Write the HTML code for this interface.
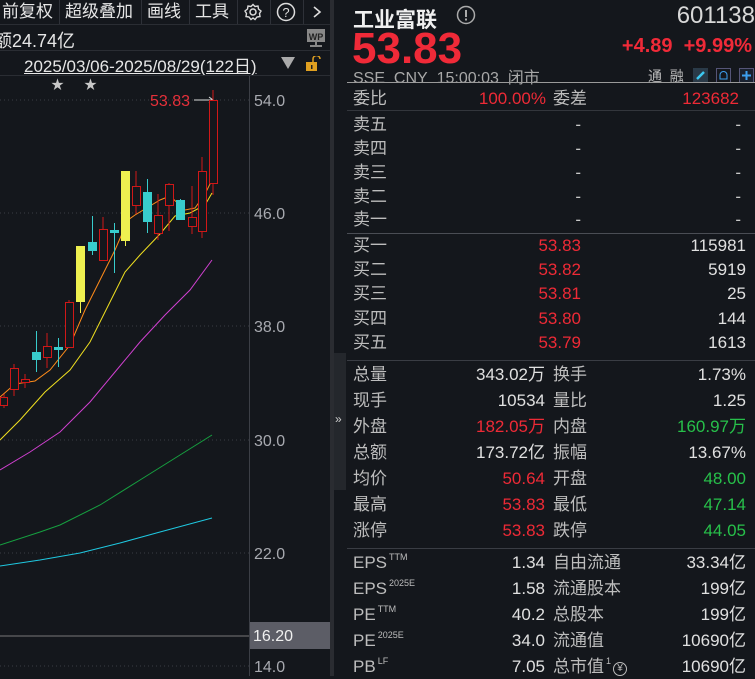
<!DOCTYPE html>
<html><head><meta charset="utf-8"><style>
*{margin:0;padding:0;box-sizing:border-box}
body{width:755px;height:676px;background:#14171c;overflow:hidden;position:relative;font-family:"Liberation Sans","Noto Sans CJK SC",sans-serif;color:#c8c8c8}
.a{position:absolute;white-space:nowrap}
.tb{position:absolute;top:0;height:24px;font-size:17px;line-height:24px;color:#e6e6e6}
.sep{position:absolute;top:0;width:1px;height:24px;background:#2e3138}
.row{position:absolute;left:353px;width:393px;height:24px;font-size:17px;line-height:24px}
.row span{position:absolute}
.l1{left:0;color:#bdbdbd}.v1{right:201px;text-align:right}.l2{left:200px;color:#bdbdbd}.v2{right:0;text-align:right}
.w{color:#e0e0e0}.r{color:#ee2a36}.g{color:#27c04a}
sup{font-size:9px;vertical-align:baseline;position:relative;top:-8px;line-height:0;margin-left:2px}
.yen{display:inline-block;width:14px;height:14px;border:1px solid #bbb;border-radius:50%;font-size:10px;line-height:12px;text-align:center;vertical-align:1px;margin-left:2px}
</style></head><body>
<div class="tb" style="left:2px">前复权</div><div class="sep" style="left:59px"></div>
<div class="tb" style="left:65px">超级叠加</div><div class="sep" style="left:141px"></div>
<div class="tb" style="left:147px">画线</div><div class="sep" style="left:189px"></div>
<div class="tb" style="left:195px">工具</div><div class="sep" style="left:237px"></div>
<svg class="a" style="left:243px;top:3px" width="20" height="18" viewBox="0 0 20 18"><circle cx="10" cy="9" r="3" fill="none" stroke="#ddd" stroke-width="1.5"/><path d="M10 1.5 L12 3.5 L15 3 L15.5 6 L18 8 L16.5 10.5 L17 13.5 L14 14 L12 16.5 L10 15 L8 16.5 L6 14 L3 13.5 L3.5 10.5 L2 8 L4.5 6 L5 3 L8 3.5 Z" fill="none" stroke="#ddd" stroke-width="1.4"/></svg>
<div class="sep" style="left:270px"></div>
<svg class="a" style="left:276px;top:2px" width="20" height="20"><circle cx="10" cy="10" r="8.5" fill="none" stroke="#ddd" stroke-width="1.5"/><text x="10" y="15" font-size="13" fill="#ddd" text-anchor="middle" font-family="Liberation Sans">?</text></svg>
<div class="sep" style="left:303px"></div>
<svg class="a" style="left:311px;top:5px" width="12" height="14"><path d="M3 2 L9 7 L3 12" fill="none" stroke="#ddd" stroke-width="1.6"/></svg>
<div class="a" style="left:0;top:24px;width:330px;height:1px;background:#2a2d33"></div>
<div class="a" style="left:-6px;top:27px;font-size:18px;color:#e6e6e6">额24.74亿</div>
<svg class="a" style="left:306px;top:28px" width="20" height="20"><rect x="1" y="1" width="18" height="13" fill="#888"/><text x="10" y="12" font-size="9" font-weight="bold" fill="#222" text-anchor="middle" font-family="Liberation Sans">WP</text><rect x="9" y="14" width="2" height="3" fill="#888"/><rect x="4" y="17" width="12" height="2" fill="#888"/></svg>
<div class="a" style="left:0;top:50px;width:330px;height:1px;background:#2a2d33"></div>
<div class="a" style="left:24px;top:52px;font-size:17px;color:#e6e6e6;text-decoration:underline">2025/03/06-2025/08/29(122日)</div>
<svg class="a" style="left:280px;top:56px" width="16" height="14"><path d="M1 1 L15 1 L8 13 Z" fill="#aaa"/></svg>
<svg class="a" style="left:304px;top:56px" width="18" height="16"><path d="M9 6 V3 a3.5 3.5 0 0 1 7 0" fill="none" stroke="#e0a020" stroke-width="1.5"/><rect x="2" y="6" width="11" height="9" fill="#e0a020"/><rect x="7" y="9" width="1.5" height="4" fill="#222"/></svg>
<div class="a" style="left:0;top:75px;width:330px;height:1px;background:#2a2d33"></div>
<svg class="a" style="left:0;top:76px" width="330" height="600" viewBox="0 76 330 600">
<g stroke="#3a3d44" stroke-dasharray="1,3" stroke-width="1">
<line x1="0" y1="100" x2="249" y2="100"/><line x1="0" y1="213" x2="249" y2="213"/><line x1="0" y1="326" x2="249" y2="326"/><line x1="0" y1="440" x2="249" y2="440"/><line x1="0" y1="553" x2="249" y2="553"/><line x1="0" y1="666" x2="249" y2="666"/></g>
<line x1="249.5" y1="76" x2="249.5" y2="676" stroke="#3c3f46"/>
<line x1="0" y1="636" x2="249" y2="636" stroke="#777"/>
<g fill="#c8c8c8" font-size="13"><text x="51" y="89">★</text><text x="84" y="89">★</text></g>
<text x="150" y="106" fill="#e6303a" font-size="16" font-family="Liberation Sans">53.83</text>
<path d="M194 100 H213 M209 97 L213 100 L209 103" stroke="#ddd" fill="none"/>
<g font-size="16" fill="#a8aab0" font-family="Liberation Sans"><text x="254" y="106">54.0</text><text x="254" y="219">46.0</text><text x="254" y="332">38.0</text><text x="254" y="446">30.0</text><text x="254" y="559">22.0</text><text x="254" y="672">14.0</text></g>
<rect x="250" y="622" width="80" height="27" fill="#5c5d66"/>
<text x="253" y="641" fill="#f0f0f0" font-size="16" font-family="Liberation Sans">16.20</text>
<g fill="none" stroke-width="1">
<polyline stroke="#1fc8e0" points="0,566 40,560 80,553 120,543 160,532 212,518"/>
<polyline stroke="#16a040" points="0,545 40,532 60,525 100,505 140,480 180,455 212,435"/>
<polyline stroke="#d040d0" points="0,470 30,452 60,432 90,402 115,372 140,342 165,315 190,290 212,260"/>
<polyline stroke="#f0e020" points="0,440 20,420 45,392 70,370 90,342 110,302 125,272 140,255 160,234 175,216 190,213 205,205 212,193"/>
<polyline stroke="#ff8c1a" points="0,397 15,384 35,381 50,370 70,345 85,310 100,280 115,250 128,220 135,215 160,200 170,196 185,210 195,208 205,194 212,180"/>
</g>
<g stroke="#d01818" fill="none">
<path d="M4 394V408 M14 364V396 M25 374V388 M47 333V368 M69 300V347 M103 217V260 M136 171V214 M158 194V240 M169 183V231 M192 186V234 M202 157V238 M213 90V195"/>
<rect x="0.5" y="397.5" width="7" height="8" fill="#14171c"/>
<rect x="10.5" y="368.5" width="8" height="21" fill="#14171c"/>
<rect x="21.5" y="379.5" width="8" height="3" fill="#14171c"/>
<rect x="43.5" y="346.5" width="8" height="11" fill="#14171c"/>
<rect x="65.5" y="302.5" width="8" height="45" fill="#14171c"/>
<rect x="99.5" y="229.5" width="8" height="31" fill="#14171c"/>
<rect x="132.5" y="186.5" width="8" height="19" fill="#14171c"/>
<rect x="154.5" y="215.5" width="8" height="18" fill="#14171c"/>
<rect x="165.5" y="184.5" width="8" height="21" fill="#14171c"/>
<rect x="188.5" y="217.5" width="8" height="9" fill="#14171c"/>
<rect x="198.5" y="171.5" width="8" height="60" fill="#14171c"/>
<rect x="209.5" y="100.5" width="8" height="83" fill="#14171c"/>
</g>
<g stroke="#38cccc" fill="#38cccc">
<path d="M36.5 331V372 M58.5 338V367 M92.5 216V255 M114.5 223V273 M147.5 179V233 M180.5 199V220" fill="none"/>
<rect x="32" y="352" width="9" height="8" stroke="none"/><rect x="54" y="347" width="9" height="3" stroke="none"/><rect x="88" y="242" width="9" height="9" stroke="none"/><rect x="110" y="230" width="9" height="3" stroke="none"/><rect x="143" y="192" width="9" height="30" stroke="none"/><rect x="176" y="200" width="9" height="20" stroke="none"/>
</g>
<g stroke="#eef050" fill="#eef050"><path d="M80.5 300V313 M125.5 240V246" fill="none"/><rect x="76" y="246" width="9" height="56" stroke="none"/><rect x="121" y="171" width="9" height="70" stroke="none"/></g>
</svg>
<div class="a" style="left:330px;top:0;width:4px;height:676px;background:#2a2c31"></div>
<div class="a" style="left:334px;top:353px;width:12px;height:137px;background:#24272c"></div>
<div class="a" style="left:335px;top:412px;font-size:12px;color:#ccc">»</div>
<div class="a" style="left:353px;top:4px;font-size:21px;font-weight:bold;color:#f0f0f0">工业富联</div>
<svg class="a" style="left:456px;top:5px" width="20" height="20"><circle cx="10" cy="10" r="8.5" fill="none" stroke="#aaa" stroke-width="1.5"/><rect x="9" y="5" width="2" height="7" fill="#aaa"/><rect x="9" y="13.5" width="2" height="2" fill="#aaa"/></svg>
<div class="a" style="right:0;top:2px;font-size:24px;color:#d8d8d8">601138</div>
<div class="a" style="left:352px;top:24px;font-size:44px;font-weight:bold;color:#f02a38">53.83</div>
<div class="a" style="right:3px;top:35px;font-size:20px;font-weight:bold;color:#f02a38">+4.89&nbsp; +9.99%</div>
<div class="a" style="left:353px;top:64px;font-size:16px;color:#a8a8a8">SSE&nbsp; CNY&nbsp; 15:00:03&nbsp; 闭市</div>
<div class="a" style="left:648px;top:66px;font-size:14px;color:#bbb">通&nbsp; 融</div>
<div class="a" style="left:693px;top:68px;width:15px;height:14px;background:#2a3a48"></div><svg class="a" style="left:694px;top:68px" width="14" height="14"><path d="M3 11 L10 4" stroke="#3cc8f0" stroke-width="2.5"/></svg>
<svg class="a" style="left:716px;top:68px" width="15" height="15"><rect x="0.5" y="0.5" width="14" height="14" fill="none" stroke="#557"/><path d="M4 11 V7 a3.5 3.5 0 0 1 7 0 V11 Z" fill="none" stroke="#3ca0f0"/></svg>
<svg class="a" style="left:739px;top:68px" width="15" height="15"><rect x="0.5" y="0.5" width="14" height="14" fill="#1a2230" stroke="#557"/><path d="M7.5 3 V12 M3 7.5 H12" stroke="#3ca0f0" stroke-width="2"/></svg>
<div class="a" style="left:347px;top:82px;width:408px;height:1px;background:#9a9a9a"></div>
<div class="row" style="top:87px"><span class="l1">委比</span><span class="v1 r" style="right:200px">100.00%</span><span class="l2">委差</span><span class="v2 r" style="right:7px">123682</span></div>
<div class="a" style="left:347px;top:110px;width:408px;height:1px;background:#33363c"></div>
<div class="row" style="top:113px"><span class="l1">卖五</span><span class="v1" style="right:165px">-</span><span class="v2" style="right:5px">-</span></div>
<div class="row" style="top:137px"><span class="l1">卖四</span><span class="v1" style="right:165px">-</span><span class="v2" style="right:5px">-</span></div>
<div class="row" style="top:161px"><span class="l1">卖三</span><span class="v1" style="right:165px">-</span><span class="v2" style="right:5px">-</span></div>
<div class="row" style="top:185px"><span class="l1">卖二</span><span class="v1" style="right:165px">-</span><span class="v2" style="right:5px">-</span></div>
<div class="row" style="top:208px"><span class="l1">卖一</span><span class="v1" style="right:165px">-</span><span class="v2" style="right:5px">-</span></div>
<div class="a" style="left:347px;top:233px;width:408px;height:1px;background:#4a4d54"></div>
<div class="row" style="top:234px"><span class="l1">买一</span><span class="v1 r" style="right:165px">53.83</span><span class="v2 w">115981</span></div>
<div class="row" style="top:258px"><span class="l1">买二</span><span class="v1 r" style="right:165px">53.82</span><span class="v2 w">5919</span></div>
<div class="row" style="top:282px"><span class="l1">买三</span><span class="v1 r" style="right:165px">53.81</span><span class="v2 w">25</span></div>
<div class="row" style="top:307px"><span class="l1">买四</span><span class="v1 r" style="right:165px">53.80</span><span class="v2 w">144</span></div>
<div class="row" style="top:331px"><span class="l1">买五</span><span class="v1 r" style="right:165px">53.79</span><span class="v2 w">1613</span></div>
<div class="a" style="left:347px;top:360px;width:408px;height:1px;background:#3a3d44"></div>
<div class="row" style="top:363px"><span class="l1">总量</span><span class="v1 w">343.02万</span><span class="l2">换手</span><span class="v2 w">1.73%</span></div>
<div class="row" style="top:389px"><span class="l1">现手</span><span class="v1 w">10534</span><span class="l2">量比</span><span class="v2 w">1.25</span></div>
<div class="row" style="top:415px"><span class="l1">外盘</span><span class="v1 r">182.05万</span><span class="l2">内盘</span><span class="v2 g">160.97万</span></div>
<div class="row" style="top:441px"><span class="l1">总额</span><span class="v1 w">173.72亿</span><span class="l2">振幅</span><span class="v2 w">13.67%</span></div>
<div class="row" style="top:467px"><span class="l1">均价</span><span class="v1 r">50.64</span><span class="l2">开盘</span><span class="v2 g">48.00</span></div>
<div class="row" style="top:493px"><span class="l1">最高</span><span class="v1 r">53.83</span><span class="l2">最低</span><span class="v2 g">47.14</span></div>
<div class="row" style="top:519px"><span class="l1">涨停</span><span class="v1 r">53.83</span><span class="l2">跌停</span><span class="v2 g">44.05</span></div>
<div class="a" style="left:347px;top:548px;width:408px;height:1px;background:#3a3d44"></div>
<div class="row" style="top:551px"><span class="l1">EPS<sup>TTM</sup></span><span class="v1 w">1.34</span><span class="l2">自由流通</span><span class="v2 w">33.34亿</span></div>
<div class="row" style="top:577px"><span class="l1">EPS<sup>2025E</sup></span><span class="v1 w">1.58</span><span class="l2">流通股本</span><span class="v2 w">199亿</span></div>
<div class="row" style="top:603px"><span class="l1">PE<sup>TTM</sup></span><span class="v1 w">40.2</span><span class="l2">总股本</span><span class="v2 w">199亿</span></div>
<div class="row" style="top:629px"><span class="l1">PE<sup>2025E</sup></span><span class="v1 w">34.0</span><span class="l2">流通值</span><span class="v2 w">10690亿</span></div>
<div class="row" style="top:655px"><span class="l1">PB<sup>LF</sup></span><span class="v1 w">7.05</span><span class="l2">总市值<sup>1</sup><span class="yen" style="position:static">¥</span></span><span class="v2 w">10690亿</span></div>
</body></html>
